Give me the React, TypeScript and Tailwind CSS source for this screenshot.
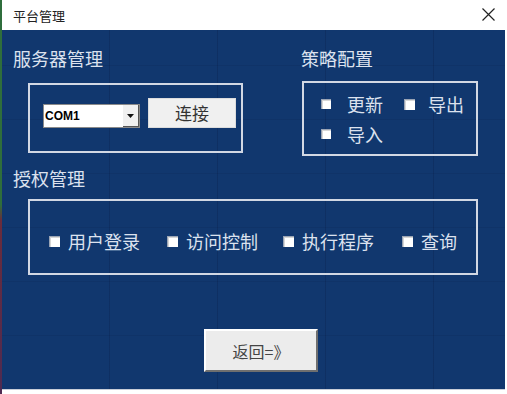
import React from "react";

const font = { fontFamily: '"Noto Sans CJK SC", "Noto Sans", sans-serif' };

function Cb({ size = "w-[10px] h-[10px]" }: { size?: string }) {
  return (
    <span
      className={`${size} shrink-0 bg-white border-t border-l border-[#9aa4b4] shadow-[inset_1px_1px_0_#d6d6d6]`}
    />
  );
}

export default function App() {
  return (
    <div className="w-[507px] h-[394px] bg-white flex overflow-hidden" style={font}>
      <div className="w-[2px] h-full bg-[linear-gradient(to_bottom,#2f6e3c_0%,#2f6e3c_52%,#6b2c3c_56%,#4e2b52_100%)]" />
      <div className="flex-1 flex flex-col">
        <div className="h-[30px] flex items-center justify-between pl-[11px] pr-[11px]">
          <span className="text-[13px] leading-none text-[#222]">平台管理</span>
          <svg width="15" height="15" viewBox="0 0 15 15" className="mb-[1px]">
            <path d="M1.5 1.5 L13.5 13.5 M13.5 1.5 L1.5 13.5" stroke="#222" strokeWidth="1.2" fill="none" />
          </svg>
        </div>
        <div className="h-[359px] mr-[2px] bg-[#11376e] bg-[repeating-linear-gradient(90deg,transparent_0,transparent_107px,rgba(5,20,60,0.22)_107px,rgba(5,20,60,0.22)_108px),repeating-linear-gradient(0deg,transparent_0,transparent_53px,rgba(5,20,60,0.12)_53px,rgba(5,20,60,0.12)_54px)] pl-[10px] pt-[16px] flex flex-col text-[#dce2ee]">
          {/* top row */}
          <div className="flex">
            <div className="w-[288px] flex flex-col">
              <div className="h-[24px] text-[18px] leading-[24px] pl-[1px]">服务器管理</div>
              <div className="ml-[16px] mt-[13px] w-[215px] h-[70px] border-2 border-[#d2d8e4] flex items-start pl-[13px]">
                <div className="mt-[19px] w-[97px] h-[24px] bg-white border border-[#8a8a8a] flex items-stretch">
                  <span
                    className="flex-1 text-[12px] font-bold text-black leading-[22px] pl-[1px]"
                    style={{ fontFamily: '"Liberation Sans", Arial, sans-serif' }}
                  >
                    COM1
                  </span>
                  <span className="w-[16px] bg-[#f0f0f0] border-r border-b border-[#555] flex items-center justify-center">
                    <svg width="7" height="4" viewBox="0 0 7 4">
                      <path d="M0 0 H7 L3.5 4 Z" fill="#111" />
                    </svg>
                  </span>
                </div>
                <div className="mt-[13px] ml-[8px] w-[88px] h-[30px] bg-[#f0f0f0] border border-[#dcdcdc] flex items-center justify-center text-[17px] text-[#333]">
                  连接
                </div>
              </div>
            </div>
            <div className="flex flex-col">
              <div className="h-[24px] text-[18px] leading-[24px] pl-[1px]">策略配置</div>
              <div className="ml-[2px] mt-[11px] w-[176px] h-[75px] border-2 border-[#d2d8e4] pt-[9px] flex flex-col gap-[6px]">
                <div className="h-[24px] flex items-center text-[18px] leading-[24px]">
                  <span className="ml-[17px] flex items-center">
                    <Cb />
                  </span>
                  <span className="ml-[16px]">更新</span>
                  <span className="ml-[21px] flex items-center">
                    <Cb size="w-[11px] h-[11px]" />
                  </span>
                  <span className="ml-[13px]">导出</span>
                </div>
                <div className="h-[24px] flex items-center text-[18px] leading-[24px]">
                  <span className="ml-[17px] flex items-center">
                    <Cb />
                  </span>
                  <span className="ml-[16px]">导入</span>
                </div>
              </div>
            </div>
          </div>
          {/* auth */}
          <div className="mt-[10px] h-[24px] text-[18px] leading-[24px] pl-[1px]">授权管理</div>
          <div className="ml-[16px] mt-[9px] w-[450px] h-[76px] border-2 border-[#d2d8e4] pt-[28px] pl-[19px]">
            <div className="h-[24px] flex items-center text-[18px] leading-[24px]">
              <Cb size="w-[11px] h-[11px]" />
              <span className="ml-[8px]">用户登录</span>
              <span className="ml-[27px] flex items-center">
                <Cb size="w-[11px] h-[11px]" />
              </span>
              <span className="ml-[8px]">访问控制</span>
              <span className="ml-[25px] flex items-center">
                <Cb size="w-[11px] h-[11px]" />
              </span>
              <span className="ml-[8px]">执行程序</span>
              <span className="ml-[28px] flex items-center">
                <Cb size="w-[11px] h-[11px]" />
              </span>
              <span className="ml-[8px]">查询</span>
            </div>
          </div>
          {/* return */}
          <div className="ml-[192px] mt-[54px] w-[114px] h-[43px] border-2 border-t-white border-l-white border-b-[#6f6f6f] border-r-[#6f6f6f] bg-[#ececec] flex items-center justify-center text-[16px] text-[#444]">
            返回=》
          </div>
        </div>
        <div className="flex-1 border-t border-[#c9ced8] bg-white mr-[2px]" />
      </div>
    </div>
  );
}
